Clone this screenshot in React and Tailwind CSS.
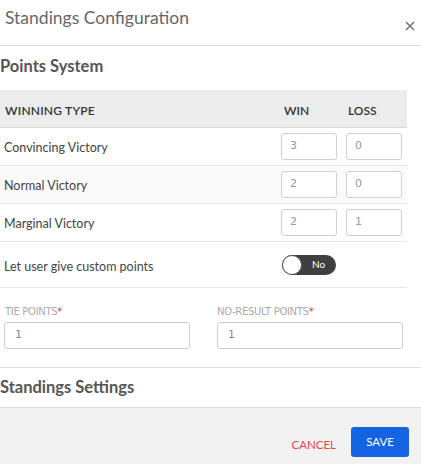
import React from "react";

const rows = [
  { name: "Convincing Victory", win: "3", loss: "0", bg: "bg-white" },
  { name: "Normal Victory", win: "2", loss: "0", bg: "bg-[#fafafa]" },
  { name: "Marginal Victory", win: "2", loss: "1", bg: "bg-white" },
];

function NumBox({ v }) {
  return (
    <div className="w-[56px] h-[27px] border border-[#d0d0d0] rounded-[3px] bg-white flex items-center pl-[8px] text-[11px] text-[#999] font-['DejaVu_Sans',sans-serif]">
      {v}
    </div>
  );
}

export default function App() {
  return (
    <div className="w-[421px] h-[464px] bg-white flex flex-col overflow-hidden font-['Lato',sans-serif] text-[#444]">
      <div className="h-[46px] shrink-0 border-b border-[#dedede] relative">
        <div className="pl-[5px] pt-[6px] text-[17.5px] leading-[24px] text-[#666]">Standings Configuration</div>
        <div className="absolute right-[4px] top-[17px] w-[14px] h-[18px] flex items-center justify-center">
          <svg width="10" height="10" viewBox="0 0 10 10">
            <path d="M1 1 L9 9 M9 1 L1 9" stroke="#777" strokeWidth="1.6" />
          </svg>
        </div>
      </div>
      <div className="flex-1 flex flex-col">
        <div className="h-[44px] flex items-center text-[16.5px] font-bold text-[#555] pb-[3px]">Points System</div>
        <div className="w-[407px]">
          <div className="h-[38px] bg-[#ececec] border-b border-[#d8d8d8] flex items-center text-[12px] font-semibold text-[#333] pt-[4px]">
            <div className="flex-1 pl-[5px] tracking-[0.2px]">WINNING TYPE</div>
            <div className="w-[64px] pl-[1px]">WIN</div>
            <div className="w-[60px] pl-[1px]">LOSS</div>
          </div>
          {rows.map((r) => (
            <div key={r.name} className={`h-[38px] ${r.bg} border-b border-[#e6e6e6] flex items-center text-[12.5px] text-[#444]`}>
              <div className="flex-1 pl-[4px] pt-[4px]">{r.name}</div>
              <div className="flex gap-[9px] pr-[5px]">
                <NumBox v={r.win} />
                <NumBox v={r.loss} />
              </div>
            </div>
          ))}
          <div className="h-[46px] border-b border-[#e6e6e6] flex items-center text-[12.5px] text-[#444]">
            <div className="flex-1 pl-[4px] pt-[6px]">Let user give custom points</div>
            <div className="mr-[71px] w-[54px] h-[20px] rounded-full bg-[#3f3f3f] relative flex items-center">
              <div className="absolute left-0 top-0 w-[20px] h-[20px] rounded-full bg-white border border-[#555]" />
              <div className="ml-[30px] text-[10px] text-white">No</div>
            </div>
          </div>
          <div className="grid grid-cols-2 gap-[27px] pl-[4px] pr-[4px] pt-[17px] pb-[18px]">
            <div>
              <div className="text-[10px] text-[#aaa] leading-[14px] pl-[1px] font-['DejaVu_Sans',sans-serif] tracking-[-0.3px]">
                TIE POINTS<span className="text-[#e53935]">*</span>
              </div>
              <div className="mt-[3px] h-[27px] border border-[#cfcfcf] rounded-[3px] flex items-center pl-[10px] text-[11px] text-[#888] font-['DejaVu_Sans',sans-serif]">1</div>
            </div>
            <div>
              <div className="text-[10px] text-[#aaa] leading-[14px] font-['DejaVu_Sans',sans-serif] tracking-[-0.3px]">
                NO-RESULT POINTS<span className="text-[#e53935]">*</span>
              </div>
              <div className="mt-[3px] h-[27px] border border-[#cfcfcf] rounded-[3px] flex items-center pl-[10px] text-[11px] text-[#888] font-['DejaVu_Sans',sans-serif]">1</div>
            </div>
          </div>
        </div>
        <div className="border-t border-[#e0e0e0] h-[40px] flex items-center text-[16.5px] font-bold text-[#555]">Standings Settings</div>
        <div className="flex-1 bg-[#f2f2f2] border-t border-[#dcdcdc] flex items-start justify-end pt-[19px] pr-[12px]">
          <div className="text-[11.5px] text-[#e84545] mt-[9px] mr-[15px]">CANCEL</div>
          <div className="w-[58px] h-[30px] bg-[#1463e2] rounded-[3px] flex items-center justify-center text-[11.5px] text-white">SAVE</div>
        </div>
      </div>
    </div>
  );
}
